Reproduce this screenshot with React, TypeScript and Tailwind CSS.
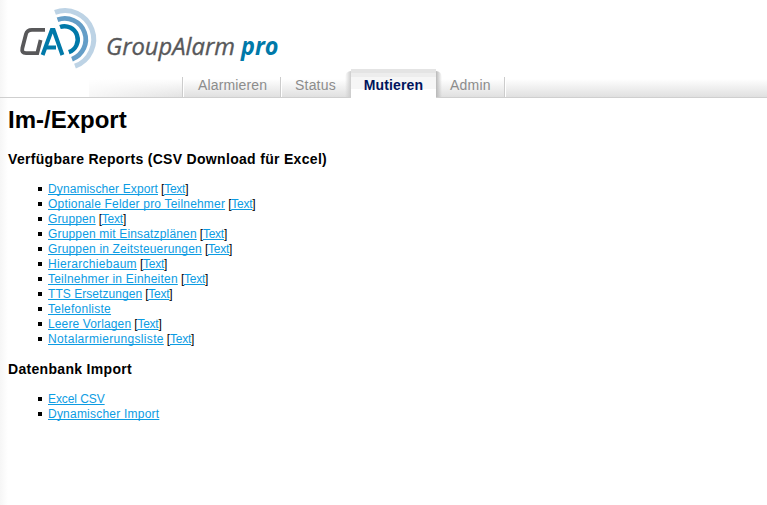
import React from "react";

type Report = { label: string; tracking: string; text?: boolean };

const reports: Report[] = [
  { label: "Dynamischer Export", tracking: "tracking-[0.11px]", text: true },
  { label: "Optionale Felder pro Teilnehmer", tracking: "tracking-[0.19px]", text: true },
  { label: "Gruppen", tracking: "tracking-[0.14px]", text: true },
  { label: "Gruppen mit Einsatzplänen", tracking: "tracking-[0.16px]", text: true },
  { label: "Gruppen in Zeitsteuerungen", tracking: "tracking-[0.17px]", text: true },
  { label: "Hierarchiebaum", tracking: "tracking-[0.3px]", text: true },
  { label: "Teilnehmer in Einheiten", tracking: "tracking-[0.22px]", text: true },
  { label: "TTS Ersetzungen", tracking: "tracking-[0.05px]", text: true },
  { label: "Telefonliste", tracking: "tracking-[0.25px]" },
  { label: "Leere Vorlagen", tracking: "tracking-[0.13px]", text: true },
  { label: "Notalarmierungsliste", tracking: "tracking-[0.32px]", text: true },
];

const imports: Report[] = [
  { label: "Excel CSV", tracking: "tracking-[-0.08px]" },
  { label: "Dynamischer Import", tracking: "tracking-[0.22px]" },
];

function Logo() {
  return (
    <svg width="290" height="69" viewBox="0 0 290 69" className="block">
      <g fill="none">
        <path d="M45 29.8H32Q27 29.8 26 34L22.4 48Q21.2 53.2 26 53.2H37.3L40.6 40" stroke="#58585a" strokeWidth="3.8" />
        <path d="M42.6 55L51.8 30H53.6L62.4 55M46 47.5H56" stroke="#0079a9" strokeWidth="4" />
        <path d="M60 27A12.8 12.8 0 0 1 68.8 52.2" stroke="#0079a9" strokeWidth="4.4" />
        <path d="M57.5 19.8A20.5 20.5 0 0 1 72 59.2" stroke="#659ec7" strokeWidth="4.8" />
        <path d="M55 12.4A28.2 28.2 0 0 1 75 66.2" stroke="#bdd3e5" strokeWidth="5" />
      </g>
      <g fontFamily="'Open Sans', sans-serif" fontStyle="italic" fontSize="24.5">
        <text x="106" y="55" fill="#58585a" stroke="#58585a" strokeWidth="0.35" textLength="129" lengthAdjust="spacingAndGlyphs">GroupAlarm</text>
        <text x="241" y="55" fill="#0079a9" fontWeight="700" textLength="37.5" lengthAdjust="spacingAndGlyphs">pro</text>
      </g>
    </svg>
  );
}

const link = "text-[#0c9ce3] underline decoration-1 underline-offset-1 [text-decoration-skip-ink:none]";

function ReportList({ items }: { items: Report[] }) {
  return (
    <ul className="pl-[38px] text-[12px] leading-[15px]">
      {items.map((r) => (
        <li key={r.label} className="flex h-[15px] items-center whitespace-pre">
          <span className="mr-[6px] mb-[2px] -ml-[8px] size-1 bg-black" />
          <a className={`${link} ${r.tracking}`}>{r.label}</a>
          {r.text && (
            <span className="tracking-[-0.25px]">
              {" ["}
              <a className={link}>Text</a>]
            </span>
          )}
        </li>
      ))}
    </ul>
  );
}

export default function App() {
  return (
    <div className="h-[505px] w-[767px] overflow-hidden bg-white bg-linear-to-r from-[#f6f6f6] to-white to-[8px] font-['Liberation_Sans',Arial,sans-serif] text-black">
      <header className="flex h-[98px] flex-col">
        <div className="h-[69px]">
          <Logo />
        </div>
        <nav className="flex h-[29px] text-[14px] text-[#8c8c8c]">
          <div className="w-[89px] border-b border-[#cfcfcf]" />
          <div className="w-[93px] border-b border-[#cfcfcf] bg-linear-to-b from-white from-[35%] to-[#e3e3e3]">
            <div className="h-full bg-linear-to-r from-white/70 to-transparent" />
          </div>
          <div className="flex w-[169px] items-end border-b border-[#cfcfcf] bg-linear-to-b from-white from-[35%] to-[#e0e0e0]">
            <span className="h-5 w-[98px] border-l border-[#cccccc] pl-[15px] leading-[16px] tracking-[0.15px] shadow-[inset_1px_0_0_white]">Alarmieren</span>
            <span className="h-5 w-[65px] border-l border-[#cccccc] pl-[14px] leading-[16px] tracking-[0.2px] shadow-[inset_1px_0_0_white]">Status</span>
            <span className="h-[26px] w-[6px] rounded-tl-md bg-linear-to-r from-transparent to-[#cccccc]" />
          </div>
          <div className="w-[85px] text-center font-bold text-[#00145c]">
            <div className="h-[4px] bg-[#e4e4e4]" />
            <div className="h-[4px] bg-[#ededed]" />
            <div className="h-[21px] bg-linear-to-b from-[#f6f6f6] from-[12px] to-white to-[12px] leading-[16px] tracking-[0.15px]">Mutieren</div>
          </div>
          <div className="flex grow items-end border-b border-[#cfcfcf] bg-linear-to-b from-white from-[35%] to-[#e0e0e0]">
            <span className="h-[26px] w-[6px] rounded-tr-md bg-linear-to-l from-transparent to-[#b8b8b8]" />
            <span className="h-5 w-[63px] border-r border-[#cccccc] pl-[8px] leading-[16px] tracking-[0.2px]">Admin</span>
            <span className="h-5 w-px bg-white" />
          </div>
        </nav>
      </header>
      <main className="px-2">
        <h1 className="pt-2 text-[24px] leading-[28px] font-bold">Im-/Export</h1>
        <h2 className="pt-4 pb-[14px] text-[14px] leading-[18px] font-bold tracking-[0.31px]">Verfügbare Reports (CSV Download für Excel)</h2>
        <ReportList items={reports} />
        <h2 className="pt-[13px] pb-[14px] text-[14px] leading-[18px] font-bold tracking-[0.31px]">Datenbank Import</h2>
        <ReportList items={imports} />
      </main>
    </div>
  );
}
